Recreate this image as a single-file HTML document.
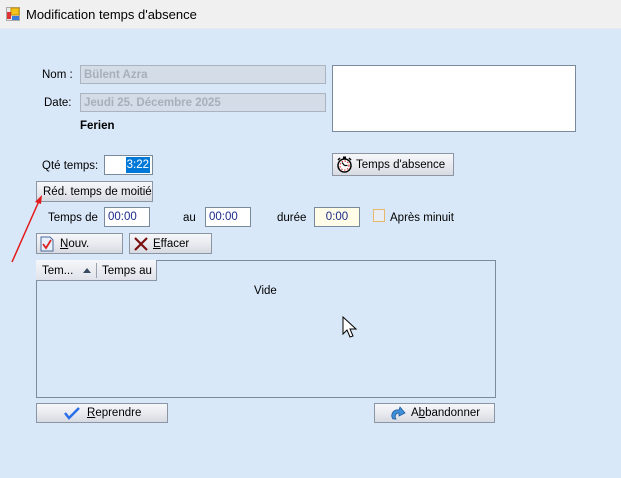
<!DOCTYPE html>
<html><head><meta charset="utf-8"><style>
*{box-sizing:border-box;margin:0;padding:0}
body{width:621px;height:478px;background:#d9e8f9;font-family:"Liberation Sans",sans-serif;font-size:11.5px;color:#000;position:relative;overflow:hidden}
.a{position:absolute}
.tb{left:0;top:0;width:621px;height:29px;background:#f0f0f0;border-bottom:1px solid #e3e9f0}
.tb span{position:absolute;left:26px;top:7px;font-size:13px;color:#000}
.in{position:absolute;background:#fff;border:1px solid #7a8a9d;font-size:11.5px;line-height:18px;padding-left:3px}
.dis{background:#d3dce7;border-color:#a9b4c0;color:#a6b0bb;font-weight:bold}
.btn{position:absolute;border:1px solid #8c95a3;background:linear-gradient(#f6f7fa,#e9ebf0 50%,#d7dae2);font-size:11.5px;line-height:20px;color:#000;white-space:nowrap}
.lbl{position:absolute;font-size:11.5px}
u{text-decoration:underline}
</style></head><body>
<div class="a tb">
<svg class="a" style="left:6px;top:7px" width="14" height="14"><rect x="0.5" y="0.5" width="13" height="13" fill="#e8e8e8" stroke="#aaa"/><rect x="5" y="1" width="8" height="7" fill="#f4c21b" stroke="#c58d00"/><rect x="1" y="5" width="4" height="7" fill="#d33" /><rect x="6" y="9" width="7" height="4" fill="#3c7bd8"/></svg>
<span>Modification temps d'absence</span></div>

<div class="lbl" style="left:42px;top:69px">Nom :</div>
<div class="in dis" style="left:80px;top:65px;width:246px;height:19px">Bülent Azra</div>
<div class="lbl" style="left:44px;top:97px">Date:</div>
<div class="in dis" style="left:80px;top:93px;width:246px;height:19px">Jeudi 25. Décembre 2025</div>
<div class="lbl" style="left:80px;top:120px;font-weight:bold">Ferien</div>
<div class="in" style="left:332px;top:65px;width:244px;height:67px"></div>

<div class="lbl" style="left:42px;top:160px">Qté temps:</div>
<div class="in" style="left:104px;top:155px;width:49px;height:20px"><span style="position:absolute;right:2px;top:1px;background:#0078d7;color:#fff;line-height:16px;padding:0 1px">3:22</span></div>

<div class="btn" style="left:332px;top:153px;width:122px;height:23px;line-height:22px;padding-left:23px">
<svg class="a" style="left:3px;top:2px" width="17" height="17"><circle cx="8.5" cy="9.5" r="6.5" fill="#fff" stroke="#000" stroke-width="1.5"/><circle cx="8.5" cy="9.5" r="4.5" fill="none" stroke="#d22" stroke-dasharray="1.5 1.5"/><path d="M8.5 9.5L6 6.5M8.5 9.5h3" stroke="#000" stroke-width="1.2"/><rect x="7" y="0.5" width="3" height="2" fill="#000"/><path d="M2 4l2-2M15 4l-2-2" stroke="#000" stroke-width="1.5"/></svg>
Temps d'absence</div>

<div class="btn" style="left:36px;top:181px;width:117px;height:21px;padding-left:6px">Réd. temps de moitié</div>

<div class="lbl" style="left:48px;top:212px">Temps de</div>
<div class="in" style="left:104px;top:207px;width:46px;height:20px;color:#1a2a8a">00:00</div>
<div class="lbl" style="left:183px;top:212px">au</div>
<div class="in" style="left:205px;top:207px;width:46px;height:20px;color:#1a2a8a">00:00</div>
<div class="lbl" style="left:277px;top:212px">durée</div>
<div class="in" style="left:314px;top:207px;width:46px;height:20px;background:#fffde8;text-align:center;padding:0;color:#1a2a8a">0:00</div>
<div class="a" style="left:373px;top:209px;width:12px;height:13px;border:1px solid #e8b96a;background:#e8edf3"></div>
<div class="lbl" style="left:390px;top:212px">Après minuit</div>

<div class="btn" style="left:36px;top:233px;width:87px;height:21px;padding-left:23px">
<svg class="a" style="left:3px;top:2px" width="14" height="16"><path d="M1 1h9l3 3v11H1z" fill="#e8f0fb" stroke="#4a6a9a"/><path d="M3 8l3 4 5-8" stroke="#d22" stroke-width="1.8" fill="none"/></svg>
<u>N</u>ouv.</div>
<div class="btn" style="left:129px;top:233px;width:83px;height:21px;padding-left:23px">
<svg class="a" style="left:3px;top:2px" width="16" height="16"><path d="M2 2l12 12M14 2L2 14" stroke="#7a0f0f" stroke-width="2.2"/></svg>
<u>E</u>ffacer</div>

<div class="a" style="left:36px;top:260px;width:460px;height:138px;border:1px solid #7d8a9b"></div>
<div class="btn" style="left:36px;top:260px;width:121px;height:21px;border-top:none;border-left:none;background:linear-gradient(#f6f7fa,#dfe2e9)"></div>
<div class="lbl" style="left:42px;top:265px">Tem...</div>
<svg class="a" style="left:83px;top:268px" width="8" height="5"><path d="M0 5L4 0 8 5z" fill="#3a4a60"/></svg>
<div class="a" style="left:96px;top:263px;width:1px;height:15px;background:#9aa4b0"></div>
<div class="lbl" style="left:102px;top:265px">Temps au</div>
<div class="lbl" style="left:254px;top:285px">Vide</div>

<svg class="a" style="left:342px;top:316px" width="16" height="24"><path d="M1 1v17l4-4 3 7 3-1-3-7h6z" fill="#fff" stroke="#000"/></svg>

<div class="btn" style="left:36px;top:403px;width:132px;height:20px;line-height:19px;padding-left:50px">
<svg class="a" style="left:27px;top:3px" width="16" height="13"><path d="M1 6l4 5 10-10" stroke="#2a6ee8" stroke-width="2.5" fill="none"/></svg>
<u>R</u>eprendre</div>
<div class="btn" style="left:374px;top:403px;width:121px;height:20px;line-height:19px;padding-left:36px">
<svg class="a" style="left:14px;top:2px" width="18" height="16"><path d="M4 13c-3-4 0-10 6-9l1-3 5 6-6 3 0-3c-3 0-5 3-3 6z" fill="#3f8fd8" stroke="#1d5a9e" stroke-width=".8"/></svg>
A<u>b</u>bandonner</div>

<svg class="a" style="left:0;top:0" width="621" height="478"><path d="M12 262L39 201" stroke="#e31b1b" stroke-width="1.5"/><path d="M42 195l-7 7 6 2z" fill="#e31b1b"/></svg>
</body></html>
